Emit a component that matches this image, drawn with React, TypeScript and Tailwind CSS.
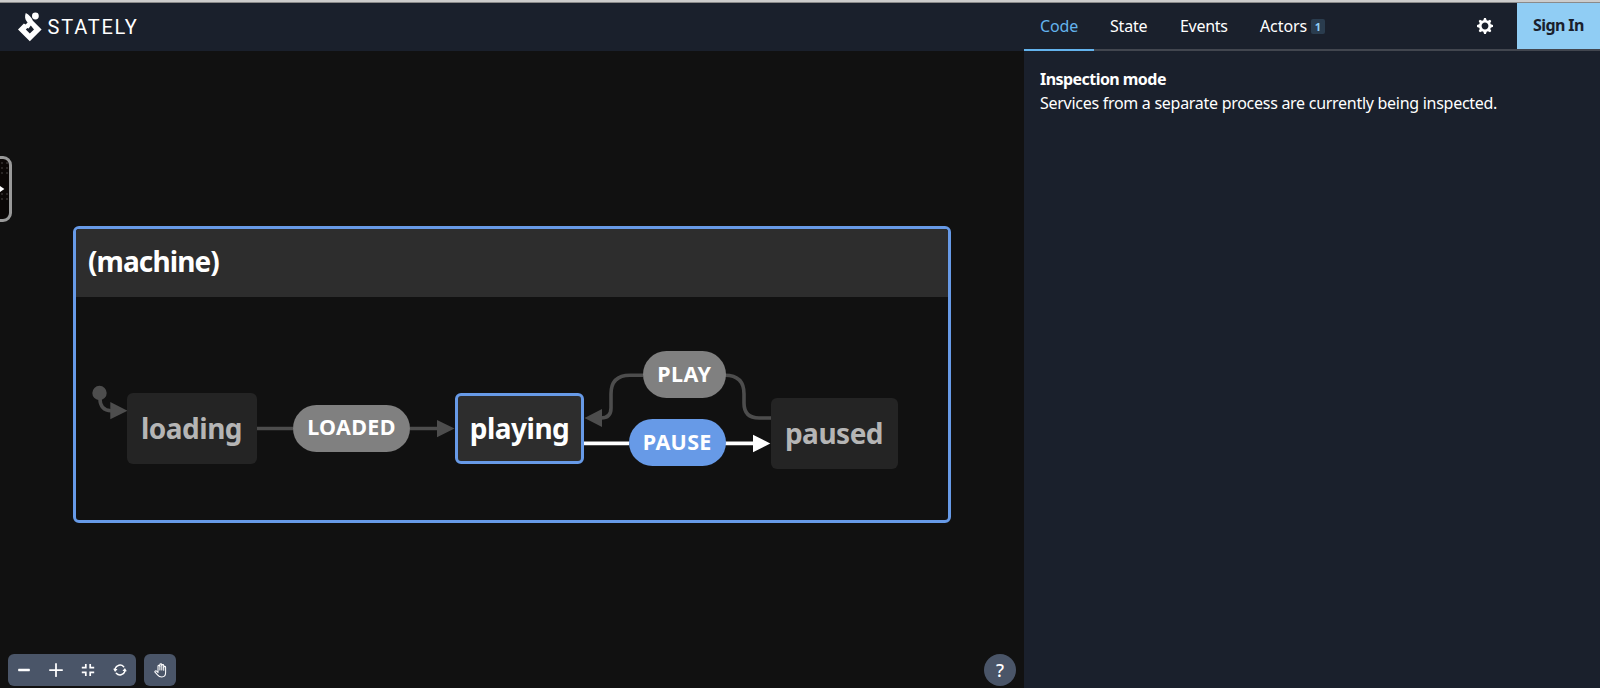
import type { ReactNode } from 'react';

const Logo = () => (
  <svg className="h-[30px] w-6" viewBox="0 0 24 30" fill="#fff">
    <path
      fillRule="evenodd"
      d="M5.9 11.4L0 17.4L11.8 29.2L23.6 17.4L14.9 8.8C13.8 5.4 11.2 2.8 7.8 0.9C6.6 4.2 6.9 6.8 8.6 9.2L9.6 10.4L7.6 12.4ZM12.8 13.6L16 17.4L11.8 21.6L7.8 17.6L9.4 16L10.6 16.6Z"
    />
    <circle cx="17.4" cy="4" r="3.4" />
  </svg>
);

const GearIcon = () => (
  <svg className="size-4" viewBox="0 0 14 14" fill="#fff">
    <path
      fillRule="evenodd"
      d="M14,7.77 L14,6.17 L12.06,5.53 L11.61,4.44 L12.49,2.6 L11.36,1.47 L9.55,2.38 L8.46,1.93 L7.77,0.01 L6.17,0.01 L5.54,1.95 L4.43,2.4 L2.59,1.52 L1.46,2.65 L2.37,4.46 L1.92,5.55 L0,6.23 L0,7.82 L1.94,8.46 L2.39,9.55 L1.51,11.39 L2.64,12.52 L4.45,11.61 L5.54,12.06 L6.23,13.98 L7.82,13.98 L8.45,12.04 L9.56,11.59 L11.4,12.47 L12.53,11.34 L11.61,9.53 L12.08,8.44 L14,7.75 Z M7,10 C5.34,10 4,8.66 4,7 C4,5.34 5.34,4 7,4 C8.66,4 10,5.34 10,7 C10,8.66 8.66,10 7,10 Z"
    />
  </svg>
);

const MinusIcon = () => (
  <svg className="size-3.5" viewBox="0 0 24 24" fill="currentColor">
    <rect x="2" y="10" width="20" height="4" rx="0.8" />
  </svg>
);

const AddIcon = () => (
  <svg className="size-3.5" viewBox="0 0 24 24" fill="currentColor">
    <path d="M0,12a1.5,1.5,0,0,0,1.5,1.5h8.75a.25.25,0,0,1,.25.25V22.5a1.5,1.5,0,0,0,3,0V13.75a.25.25,0,0,1,.25-.25H22.5a1.5,1.5,0,0,0,0-3H13.75a.25.25,0,0,1-.25-.25V1.5a1.5,1.5,0,0,0-3,0v8.75a.25.25,0,0,1-.25.25H1.5A1.5,1.5,0,0,0,0,12Z" />
  </svg>
);

const FitIcon = () => (
  <svg className="size-3.5" viewBox="0 0 14 14" fill="none" stroke="currentColor" strokeWidth="1.7">
    <path d="M0.8 4.6H4.8V0.9M9.2 0.9V4.6H13.2M0.8 9.3H4.8V13.1M9.2 13.1V9.3H13.2" />
  </svg>
);

const RepeatIcon = () => (
  <svg className="size-3.5" viewBox="0 0 24 24" fill="currentColor">
    <path d="M10.319,4.936a7.239,7.239,0,0,1,7.1,2.252,1.25,1.25,0,1,0,1.872-1.657A9.737,9.737,0,0,0,9.743,2.5,10.269,10.269,0,0,0,2.378,9.61a.249.249,0,0,1-.271.178l-1.033-.13A.491.491,0,0,0,.6,9.877a.5.5,0,0,0-.019.526l2.476,4.342a.5.5,0,0,0,.373.248.43.43,0,0,0,.062,0,.5.5,0,0,0,.359-.152l3.477-3.593a.5.5,0,0,0-.3-.844L5.15,10.172a.25.25,0,0,1-.2-.333A7.7,7.7,0,0,1,10.319,4.936Z" />
    <path d="M23.406,14.1a.5.5,0,0,0,.015-.526l-2.5-4.329A.5.5,0,0,0,20.546,9a.489.489,0,0,0-.421.151l-3.456,3.614a.5.5,0,0,0,.3.842l1.848.221a.249.249,0,0,1,.183.117.253.253,0,0,1,.023.216,7.688,7.688,0,0,1-5.369,4.9,7.243,7.243,0,0,1-7.1-2.253,1.25,1.25,0,1,0-1.872,1.656,9.74,9.74,0,0,0,9.549,3.03,10.261,10.261,0,0,0,7.369-7.12.251.251,0,0,1,.27-.179l1.058.127a.422.422,0,0,0,.06,0A.5.5,0,0,0,23.406,14.1Z" />
  </svg>
);

const HandIcon = () => (
  <svg className="h-[15px] w-[13px]" viewBox="0 0 13 15" fill="none" stroke="currentColor" strokeWidth="1.05" strokeLinecap="round" strokeLinejoin="round">
    <path d="M4 9.6V3.2a0.95 0.95 0 0 1 1.9 0V1.8a0.95 0.95 0 0 1 1.9 0V2.5a0.95 0.95 0 0 1 1.9 0V4.3a0.95 0.95 0 0 1 1.9 0V9.6C11.6 12.4 10.2 14 7.8 14C5.6 14 4.5 13.2 3.5 11.9L1 9.2A0.95 0.95 0 0 1 2.3 7.9L4 9.4" />
    <path d="M5.9 3.2V7M7.8 2.5V7M9.7 4.3V7.2" />
  </svg>
);

const ToolButton = ({ label, children }: { label: string; children: ReactNode }) => (
  <button aria-label={label} className="flex size-8 items-center justify-center text-white">
    {children}
  </button>
);

/* Transition lines; coordinates are those of the canvas below the header. */
const Edges = () => (
  <svg className="absolute inset-0 h-[637px] w-[1024px]" viewBox="0 51 1024 637" fill="none" strokeWidth="3.6">
    <circle cx="99.5" cy="393" r="7.2" fill="#4d4d4d" />
    <g stroke="#4d4d4d">
      <path d="M100 399C100 406 104 410.7 111 410.7" />
      <path d="M257 428.5H293M410 428.5H438" />
      <path d="M771 418H759Q744 418 744 403V394Q744 375.3 725 375.3" />
      <path d="M643 375.3H630Q611 375.3 611 394V408Q611 418 601 418" />
    </g>
    <path d="M584 443.4H629M725 443.4H754" stroke="#fff" />
    <path d="M110.3 402V419.3L127.5 410.7ZM437 420V437.3L454.5 428.6ZM602 409V427L584.5 418Z" fill="#4d4d4d" />
    <path d="M753 434.8V452.3L770.3 443.5Z" fill="#fff" />
  </svg>
);

export default function App() {
  return (
    <div className="flex h-[688px] w-[1600px] flex-col overflow-hidden bg-[#111111] font-['Noto_Sans',sans-serif] text-white">
      <div className="h-[3px] shrink-0 border-b border-[#8a8a8a] bg-[#cccccc]" />
      <div className="flex min-h-0 flex-1">
        <main className="flex w-[1024px] flex-col">
          <header className="flex h-12 shrink-0 items-center bg-[#1a202c] pl-[17.5px]">
            <Logo />
            <span className="ml-[6px] font-[Roboto,sans-serif] text-[20px] leading-none tracking-[1.8px]">STATELY</span>
          </header>

          <div className="relative flex-1">
            <section className="absolute left-[73px] top-[175px] h-[297px] w-[878px] overflow-hidden rounded-[6px] border-[3.4px] border-[#679ae7]">
              <h2 className="flex h-[68px] items-center bg-[#2d2d2d] pb-1 pl-3 text-[28px] leading-none font-bold">
                <span className="tracking-[-0.9px]">(machine)</span>
              </h2>
            </section>

            <Edges />

            <div className="absolute left-[126.5px] top-[341.5px] flex h-[71px] w-[130px] items-center justify-center rounded-[6px] bg-[#242424] text-[28px] leading-none font-bold text-[#b5b5b5]">
              <span className="tracking-[-0.5px]">loading</span>
            </div>
            <div className="absolute left-[455px] top-[341.5px] flex h-[71.5px] w-[129px] items-center justify-center rounded-[6px] border-[3.4px] border-[#679ae7] bg-[#2d2d2d] text-[28px] leading-none font-bold">
              <span className="tracking-[-0.5px]">playing</span>
            </div>
            <div className="absolute left-[770.5px] top-[347px] flex h-[71px] w-[127px] items-center justify-center rounded-[6px] bg-[#242424] pb-[2px] text-[28px] leading-none font-bold text-[#b5b5b5]">
              <span className="tracking-[-0.5px]">paused</span>
            </div>

            <div className="absolute left-[293px] top-[354px] flex h-[46.5px] w-[117px] items-center justify-center rounded-full bg-[#808080] pb-[3px] text-[21.5px] leading-none font-bold">
              <span className="tracking-[0.35px]">LOADED</span>
            </div>
            <div className="absolute left-[643px] top-[300px] flex h-[46.5px] w-[82.5px] items-center justify-center rounded-full bg-[#808080] pb-[2px] text-[21.5px] leading-none font-bold">
              <span className="tracking-[0.4px]">PLAY</span>
            </div>
            <div className="absolute left-[629px] top-[368px] flex h-[47px] w-[96.5px] items-center justify-center rounded-full bg-[#679ae7] pb-[2px] text-[21.5px] leading-none font-bold">
              <span className="tracking-[0.3px]">PAUSE</span>
            </div>

            <div className="absolute left-[-20px] top-[105px] h-[66px] w-8 overflow-hidden rounded-[9px] border-[3px] border-[#999999] bg-[#0b0706]">
              <svg className="ml-[17px] h-[60px] w-[9px]" viewBox="0 0 9 60">
                <path
                  d="M2 3V15M7 3V15M2 34V42M7 34V42"
                  stroke="#2a2625"
                  strokeWidth="2"
                  strokeDasharray="2 3"
                />
                <path d="M0 27L4.4 30L0 33Z" fill="#fff" />
              </svg>
            </div>

            <div className="absolute right-2 bottom-[2px] left-2 flex">
              <div className="flex rounded-[6px] bg-[#4a5568]">
                <ToolButton label="Zoom out"><MinusIcon /></ToolButton>
                <ToolButton label="Zoom in"><AddIcon /></ToolButton>
                <ToolButton label="Fit to view"><FitIcon /></ToolButton>
                <ToolButton label="Reset canvas"><RepeatIcon /></ToolButton>
              </div>
              <div className="ml-2 rounded-[6px] bg-[#4a5568]">
                <ToolButton label="Pan mode"><HandIcon /></ToolButton>
              </div>
              <button className="ml-auto flex size-8 items-center justify-center rounded-full bg-[#4a5568] text-[18px] leading-none font-medium">
                ?
              </button>
            </div>
          </div>
        </main>

        <aside className="flex w-[576px] flex-col bg-[#1a202c]">
          <nav className="flex h-12 shrink-0 border-b-2 border-[#42464f] text-[16px] leading-6">
            <div className="-mb-[2px] flex w-[70px] items-center border-b-2 border-[#63b3ed] pl-4 text-[#63b3ed]">
              <span className="tracking-[-0.1px]">Code</span>
            </div>
            <div className="flex w-[70px] items-center pl-4">
              <span className="tracking-[-0.2px]">State</span>
            </div>
            <div className="flex w-[81px] items-center pl-4">
              <span className="tracking-[-0.3px]">Events</span>
            </div>
            <div className="flex items-center pl-[15px]">
              <span className="w-[51px] tracking-[-0.1px]">Actors</span>
              <span className="flex h-[15px] w-[14px] items-center justify-center rounded-[2px] bg-[#2a3c4e] text-[11px] leading-none font-bold text-[#90cdf4]">
                1
              </span>
            </div>
            <button aria-label="Settings" className="mr-6 ml-auto flex items-center">
              <GearIcon />
            </button>
            <button className="flex w-[83px] items-center bg-[#90cdf4] pb-0.5 pl-4 font-bold text-[#1a202c]">
              <span className="tracking-[-0.6px]">Sign In</span>
            </button>
          </nav>
          <div className="px-4 pt-4 text-[16px] leading-6 whitespace-nowrap">
            <p className="font-bold"><span className="tracking-[-0.55px]">Inspection mode</span></p>
            <p><span className="tracking-[-0.28px]">Services from a separate process are currently being inspected.</span></p>
          </div>
        </aside>
      </div>
    </div>
  );
}
